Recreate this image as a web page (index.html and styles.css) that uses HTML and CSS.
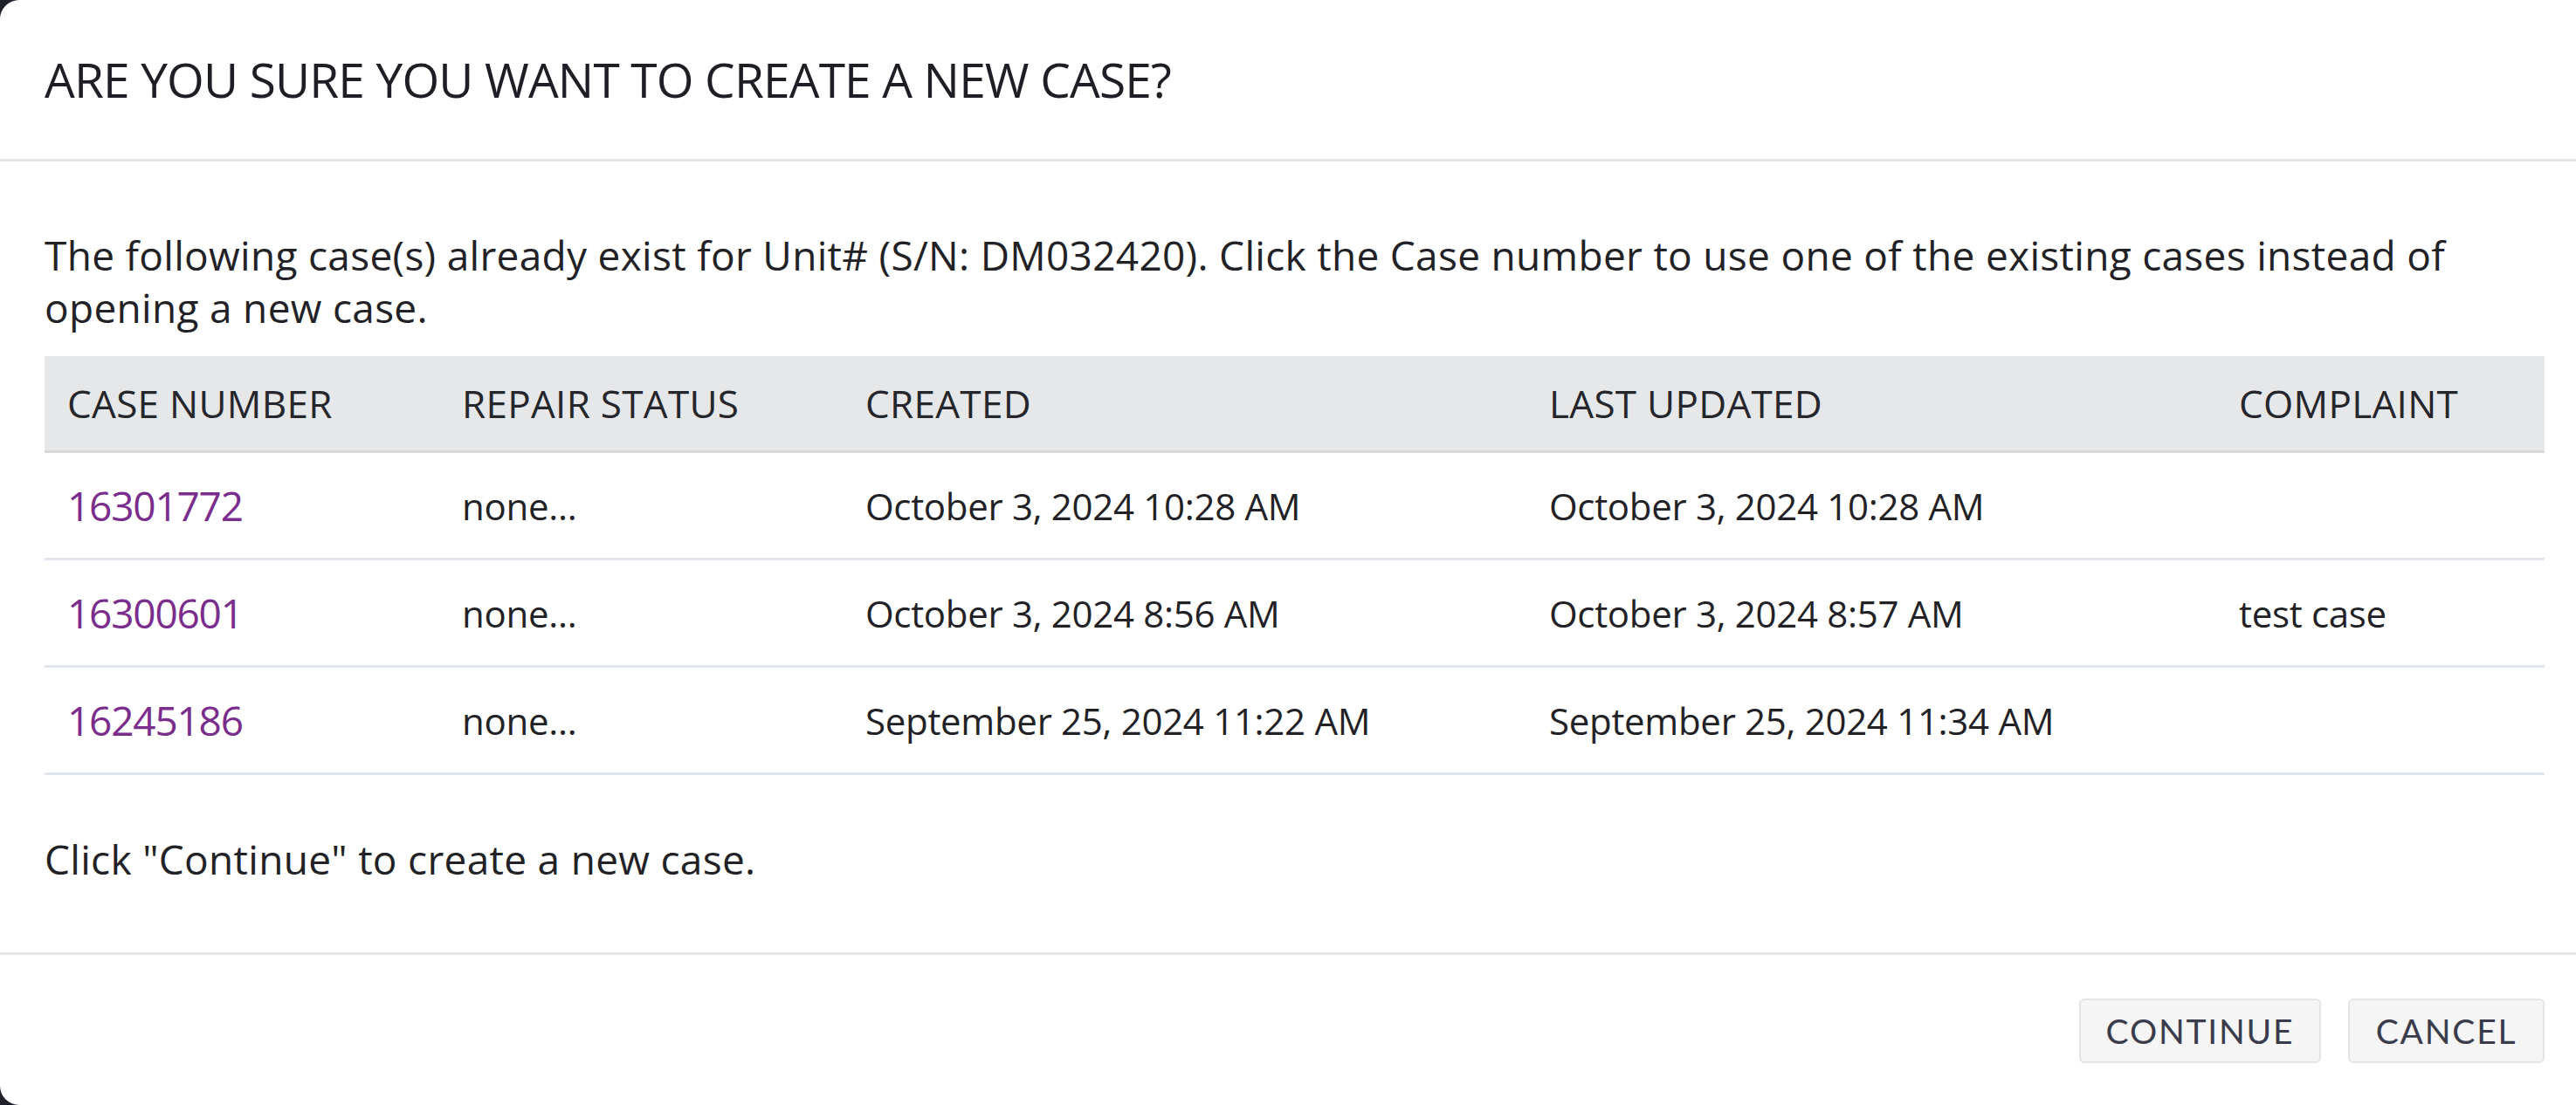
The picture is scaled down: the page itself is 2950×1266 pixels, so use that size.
FILE: index.html
```html
<!DOCTYPE html>
<html lang="en">
<head>
<meta charset="utf-8">
<title>Create a new case</title>
<link rel="stylesheet" href="styles.css">
</head>
<body>
<div class="modal">
  <header class="modal-header">
    <h1 class="modal-title">ARE YOU SURE YOU WANT TO CREATE A NEW CASE?</h1>
  </header>
  <section class="modal-body">
    <p class="intro">The following case(s) already exist for Unit# (S/N: DM032420). Click the Case number to use one of the existing cases instead of opening a new case.</p>
    <table class="cases">
      <colgroup>
        <col class="c1"><col class="c2"><col class="c3"><col class="c4"><col class="c5">
      </colgroup>
      <thead>
        <tr><th>CASE NUMBER</th><th>REPAIR STATUS</th><th>CREATED</th><th>LAST UPDATED</th><th>COMPLAINT</th></tr>
      </thead>
      <tbody>
        <tr><td><a class="case-link" href="#">16301772</a></td><td>none...</td><td>October 3, 2024 10:28 AM</td><td>October 3, 2024 10:28 AM</td><td></td></tr>
        <tr><td><a class="case-link" href="#">16300601</a></td><td>none...</td><td>October 3, 2024 8:56 AM</td><td>October 3, 2024 8:57 AM</td><td>test case</td></tr>
        <tr><td><a class="case-link" href="#">16245186</a></td><td>none...</td><td>September 25, 2024 11:22 AM</td><td>September 25, 2024 11:34 AM</td><td></td></tr>
      </tbody>
    </table>
    <p class="note">Click "Continue" to create a new case.</p>
  </section>
  <footer class="modal-footer">
    <button class="btn" type="button">CONTINUE</button>
    <button class="btn" type="button">CANCEL</button>
  </footer>
</div>
</body>
</html>
```

FILE: styles.css
```css
html, body {
  margin: 0;
  padding: 0;
}
body {
  background: #20212b;
  overflow: hidden;
  width: 2950px;
  height: 1266px;
  font-family: "Open Sans", "Noto Sans", sans-serif;
  color: #222226;
}
.modal {
  box-sizing: border-box;
  width: 2965px;
  height: 1266px;
  background: #ffffff;
  border-radius: 22px 0 0 22px;
  display: flex;
  flex-direction: column;
}
.modal-header {
  box-sizing: border-box;
  height: 185px;
  padding: 0 51px;
  display: flex;
  align-items: center;
  border-bottom: 3px solid #e5e5e6;
}
.modal-title {
  margin: 0;
  font-size: 55px;
  font-weight: 500;
  letter-spacing: -0.85px;
  line-height: 72px;
  color: #1e1f24;
}
.modal-body {
  padding: 77px 51px 77px 51px;
}
.intro {
  margin: 0 0 26px 0;
  font-size: 46px;
  line-height: 60px;
  letter-spacing: 0.3px;
}
.cases {
  width: 2863px;
  border-collapse: collapse;
  table-layout: fixed;
}
.c1 { width: 452px; }
.c2 { width: 462px; }
.c3 { width: 783px; }
.c4 { width: 790px; }
.c5 { width: 376px; }
.cases th {
  background: #e6e7e9;
  height: 108px;
  padding: 0 0 0 26px;
  text-align: left;
  font-weight: 400;
  font-size: 44px;
  letter-spacing: 0.3px;
  color: #25262b;
  border-bottom: 3px solid #d8d9db;
}
.cases td {
  height: 120px;
  padding: 0 0 0 26px;
  font-size: 42px;
  letter-spacing: -0.3px;
  border-bottom: 3px solid #e2e6ee;
  vertical-align: middle;
}
.case-link {
  color: #7a2d8c;
  text-decoration: none;
  font-size: 46px;
  letter-spacing: -1.2px;
}
.note {
  margin: 66px 0 0 0;
  font-size: 46px;
  line-height: 60px;
  letter-spacing: 0.3px;
}
.modal-footer {
  margin-top: auto;
  border-top: 3px solid #e5e5e6;
  padding: 50px 51px 48px 51px;
  display: flex;
  justify-content: flex-end;
  gap: 31px;
}
.btn {
  box-sizing: border-box;
  height: 74px;
  padding: 0;
  background: #f5f5f6;
  border: 2px solid #e4e4e6;
  border-radius: 6px;
  font-family: Lato, "Open Sans", sans-serif;
  font-size: 39px;
  letter-spacing: 1.8px;
  color: #3a3c4c;
}
.btn:first-child { width: 277px; }
.btn:last-child { width: 225px; }
```
